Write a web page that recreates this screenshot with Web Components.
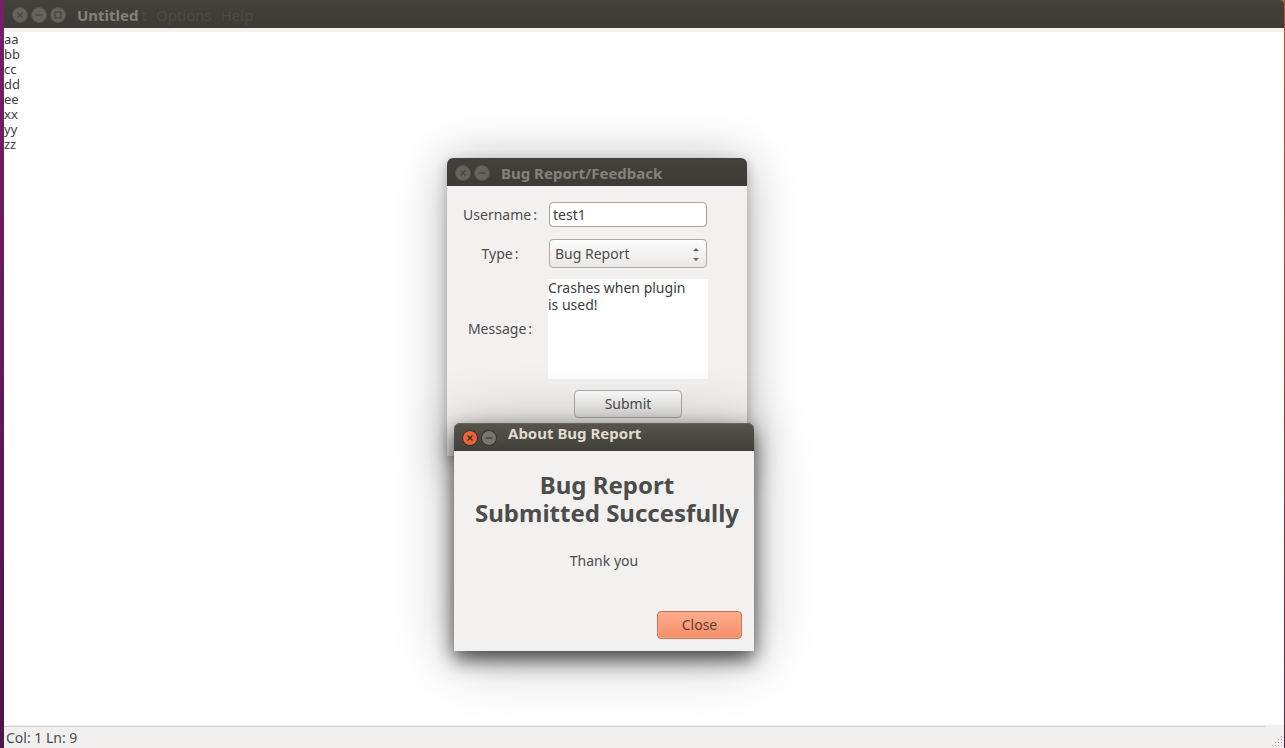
<!DOCTYPE html>
<html lang="en">
<head>
<meta charset="utf-8">
<title>Untitled</title>
<style>
html, body { margin: 0; height: 100%; overflow: hidden; }
body { font: 14px/18px "Noto Sans", "Open Sans", sans-serif; color: #4c4c4c; }
</style>
</head>
<body>
<desk-top>
  <editor-window></editor-window>
  <dialog-window slot="dialogs" class="report" heading="Bug Report/Feedback" inactive>
    <report-form></report-form>
  </dialog-window>
  <dialog-window slot="dialogs" class="about" heading="About Bug Report">
    <about-panel>
      <span slot="title">Bug Report<br>Submitted Succesfully</span>
      <span slot="text">Thank you</span>
    </about-panel>
  </dialog-window>
</desk-top>

<script>
const define = (name, html, setup) => customElements.define(name, class extends HTMLElement {
  constructor() {
    super();
    this.attachShadow({ mode: "open" }).innerHTML = html;
  }
  connectedCallback() { if (setup) setup(this, this.shadowRoot); }
});

const glyphs = {
  close: '<path d="M5.5 5.5l5 5M10.5 5.5l-5 5"/>',
  minimize: '<path d="M4.5 8h7"/>',
  maximize: '<rect x="5" y="5" width="6" height="6"/>'
};

define("window-button", `
<style>
:host { display: block; width: 16px; height: 16px; }
button { display: block; width: 16px; height: 16px; padding: 0; border: 0; background: none; }
svg { display: block; fill: none; stroke: #3a3935; stroke-width: 1.2; }
circle { stroke: #33322e; stroke-width: 1; fill: #777670; }
:host([inactive]) svg { stroke: #45443f; }
:host([inactive]) circle { fill: #64635d; stroke: #55544e; }
:host([kind=close]:not([inactive])) circle { fill: #ec6337; stroke: #33322e; }
:host([kind=close]:not([inactive])) svg { stroke: #4b1c0c; }
</style>
<button type="button"><svg width="16" height="16" viewBox="0 0 16 16" aria-hidden="true"></svg></button>`,
(el, root) => {
  const kind = el.getAttribute("kind");
  root.querySelector("button").setAttribute("aria-label", kind);
  root.querySelector("svg").innerHTML = '<circle cx="8" cy="8" r="7.5"/>' + glyphs[kind];
});

define("title-bar", `
<style>
:host { display: flex; align-items: center; gap: 3px; height: 28px; box-sizing: border-box; padding: 1px 8px 0;
  background: linear-gradient(#57554b, #403f3a); color: #dfdbd2; font-weight: 700; font-size: 15px; box-shadow: inset 0 1px #66645a; }
:host([inactive]) { background: linear-gradient(#42413c, #3c3b37); color: #84827b; box-shadow: none; }
.title { margin-left: 8px; white-space: nowrap; }
:host([raised]) .title { align-self: flex-start; }
</style>
<window-button kind="close"></window-button>
<window-button kind="minimize"></window-button>
<slot name="extra"></slot>
<span class="title"><slot></slot></span>
<slot name="menu"></slot>`,
(el, root) => {
  if (el.hasAttribute("inactive"))
    root.querySelectorAll("window-button").forEach(b => b.setAttribute("inactive", ""));
});

define("editor-menu", `
<style>
:host { display: block; }
nav { display: flex; gap: 9px; font-weight: 400; }
a { color: #4b4a44; text-decoration: none; }
</style>
<nav><a href="#">t</a><a href="#">Options</a><a href="#">Help</a></nav>`);

define("status-bar", `
<style>
:host { display: grid; grid-template-columns: 1fr auto; align-items: end; height: 23px; background: #f1f0ee; }
.text { margin-right: 6px; padding: 1px 2px 0; height: 20px; line-height: 20px; border-top: 1px solid #d3d1cf; white-space: pre; }
svg { display: block; }
</style>
<span class="text">Col: 1 Ln: 9</span>
<svg width="12" height="12" fill="#aaa6a1" aria-hidden="true">
  <path d="M9 0h1v1h-1zM6 3h1v1h-1zM9 3h1v1h-1zM3 6h1v1h-1zM6 6h1v1h-1zM9 6h1v1h-1zM0 9h1v1h-1zM3 9h1v1h-1zM6 9h1v1h-1zM9 9h1v1h-1z"/>
</svg>`);

define("editor-window", `
<style>
:host { display: flex; flex-direction: column; height: 100%; background: #f2f1f0; border-radius: 0 4px 0 0; overflow: hidden; }
textarea { flex: 1; display: block; margin: 4px 0 0; padding: 0; border: 0; outline: 0; resize: none; overflow: hidden;
  background: #fff; color: #404040; font: 13px/15px "Noto Sans", "Open Sans", sans-serif; }
</style>
<title-bar inactive>
  <window-button slot="extra" kind="maximize" inactive></window-button>
  Untitled
  <editor-menu slot="menu"></editor-menu>
</title-bar>
<textarea aria-label="Document" spellcheck="false">aa
bb
cc
dd
ee
xx
yy
zz</textarea>
<status-bar></status-bar>`);

define("dialog-window", `
<style>
:host { display: flex; flex-direction: column; box-sizing: border-box; background: #f2f1f0; border-radius: 6px 6px 0 0;
  box-shadow: 0 8px 20px rgba(0,0,0,.7), 0 6px 60px rgba(0,0,0,.3); }
:host([inactive]) { box-shadow: 0 4px 12px rgba(0,0,0,.25), 0 4px 50px rgba(0,0,0,.3); }
title-bar { border-radius: 6px 6px 0 0; }
</style>
<slot></slot>`,
(el, root) => {
  const bar = document.createElement("title-bar");
  bar.toggleAttribute("inactive", el.hasAttribute("inactive"));
  bar.toggleAttribute("raised", !el.hasAttribute("inactive"));
  bar.textContent = el.getAttribute("heading");
  root.querySelector("slot").before(bar);
});

define("report-form", `
<style>
:host { display: block; }
form { display: grid; grid-template-columns: 84px 160px; column-gap: 6px; align-items: center; padding: 16px 11px 38px; }
label { text-align: center; }
i { font-style: normal; margin-left: 2px; }
input, select, textarea, button { font: inherit; box-sizing: border-box; outline: 0; }
input { margin: 0 1px 12px; height: 25px; padding: 0 3px; border: 1px solid #a5a29e; border-radius: 4px; background: #fff; color: #3c3c3c; }
label { margin-bottom: 11px; }
.pick { position: relative; display: grid; margin: 0 1px 11px; }
select { appearance: none; height: 29px; padding: 0 5px; border: 1px solid #aeaba7; border-radius: 4px; color: #4c4c4c;
  background: linear-gradient(#fdfdfd, #e9e8e6); }
.pick svg { position: absolute; right: 7px; top: 9px; fill: #666; pointer-events: none; }
textarea { height: 100px; margin: 0 0 11px; padding: 0 12px 0 0; border: 0; resize: none; overflow: hidden; background: #fff; color: #3c3c3c; line-height: 17px; }
button { grid-column: 2; justify-self: center; width: 108px; height: 28px; padding: 0; border: 1px solid #aeaba7; border-radius: 4px;
  color: #4c4c4c; background: linear-gradient(#fdfdfd, #e4e3e1); }
</style>
<form>
  <label for="user">Username<i>:</i></label>
  <input id="user" value="test1" spellcheck="false">
  <label for="type">Type<i>:</i></label>
  <span class="pick">
    <select id="type"><option>Bug Report</option></select>
    <svg width="8" height="13" viewBox="0 0 8 13" aria-hidden="true"><path d="M1 3L4 0l3 3zM1 10l3 3 3-3z"/></svg>
  </span>
  <label for="msg">Message<i>:</i></label>
  <textarea id="msg" spellcheck="false">Crashes when plugin is used!</textarea>
  <button type="button">Submit</button>
</form>`);

define("about-panel", `
<style>
:host { display: flex; flex-direction: column; align-items: center; padding: 20px 12px 12px; }
h2 { margin: 0; padding-left: 6px; font-size: 24px; line-height: 28px; text-align: center; white-space: nowrap; }
p { margin: 25px 0 41px; }
button { align-self: flex-end; box-sizing: border-box; width: 85px; height: 28px; padding: 0; border: 1px solid #cb7355; border-radius: 4px;
  font: inherit; color: #5a4037; background: linear-gradient(#fdae8d, #f58e66); box-shadow: inset 0 0 0 1px #fba584; }
</style>
<h2><slot name="title"></slot></h2>
<p><slot name="text"></slot></p>
<button type="button">Close</button>`);

define("desk-top", `
<style>
:host { display: block; position: relative; box-sizing: border-box; height: 100vh; padding: 0 1px 0 4px; overflow: hidden;
  background: linear-gradient(#76206b, #5c1a52 60%, #4c1645) left / 4px 100% no-repeat, linear-gradient(#c05038, #a94438 40%, #5a1c3c); }
::slotted(.report) { position: absolute; left: 447px; top: 158px; width: 300px; }
::slotted(.about) { position: absolute; left: 454px; top: 423px; width: 300px; }
</style>
<slot></slot>
<slot name="dialogs"></slot>`);
</script>
</body>
</html>
